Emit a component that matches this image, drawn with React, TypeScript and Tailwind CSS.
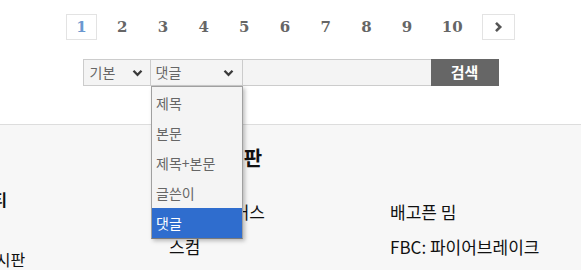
import React from "react";

function Chevron({ className = "" }: { className?: string }) {
  return (
    <svg width="11" height="8" viewBox="0 0 11 8" className={className}>
      <polyline points="1.5,1.8 5.5,5.8 9.5,1.8" fill="none" stroke="#3a3a3a" strokeWidth="2.3" />
    </svg>
  );
}

export default function App() {
  const pages = ["2", "3", "4", "5", "6", "7", "8", "9"];
  return (
    <div className="relative w-[581px] h-[270px] overflow-hidden bg-[#f7f7f7] font-['Noto_Sans_CJK_KR',sans-serif]">
      <div className="h-[125px] bg-white border-b border-[#dddddd]">
        <div className="flex justify-center gap-[9.7px] pt-[14px] font-['DejaVu_Serif',serif] font-bold text-[15px] text-[#666]">
          <div className="w-[31px] h-[26px] border border-[#e3e3e3] flex items-center justify-center text-[#6b98d0]">1</div>
          {pages.map((p) => (
            <div key={p} className="w-[31px] h-[26px] flex items-center justify-center">{p}</div>
          ))}
          <div className="w-[40px] h-[26px] flex items-center justify-center">10</div>
          <div className="w-[33px] h-[26px] border border-[#e3e3e3] flex items-center justify-center">
            <svg width="9" height="12" viewBox="0 0 9 12">
              <polyline points="2,1.8 6.2,6 2,10.2" fill="none" stroke="#555" strokeWidth="2.6" />
            </svg>
          </div>
        </div>
        <div className="flex justify-center mt-[19px] h-[27px] text-[14px] text-[#666]">
          <div className="w-[68px] border border-[#cccccc] bg-[#f4f4f4] flex items-center justify-between pl-[6px] pr-[7px]">
            <span>기본</span>
            <Chevron />
          </div>
          <div className="w-[92px] border-y border-r border-[#cccccc] bg-[#f4f4f4] flex items-center justify-between pl-[5px] pr-[8px]">
            <span>댓글</span>
            <Chevron />
          </div>
          <div className="w-[188px] border-y border-[#cccccc] bg-[#f4f4f4]" />
          <div className="w-[68px] bg-[#666666] text-white text-[15px] font-bold flex items-center justify-center">검색</div>
        </div>
      </div>

      <div className="pt-[19px]">
        <div className="pl-[207px] h-[28px] leading-[28px] text-[20px] font-bold text-[#111]">게시판</div>
        <div className="ml-[-52px] grid grid-cols-[221px_221px_221px] text-[17px] text-[#111] leading-[24px]">
          <div className="pt-[15px]">
            <div className="font-bold text-[16px]">커뮤니티</div>
            <div className="mt-[36px] text-[16px]">자유 게시판</div>
          </div>
          <div className="pt-[28px] flex flex-col gap-[11px]">
            <div className="pl-[14px]">스페 워커스</div>
            <div>스컴</div>
          </div>
          <div className="pt-[28px] flex flex-col gap-[11px]">
            <div>배고픈 밈</div>
            <div>FBC: 파이어브레이크</div>
          </div>
        </div>
      </div>

      <div className="absolute left-[151px] top-[86px] w-[92px] border border-[#a0a0a0] border-b-[#7a7a7a] bg-[#f4f4f4] pt-[1px] shadow-[2px_2px_4px_rgba(0,0,0,0.25)] text-[14px] text-[#666]">
        {["제목", "본문", "제목+본문", "글쓴이"].map((t) => (
          <div key={t} className="h-[30px] flex items-center pl-[4px]">{t}</div>
        ))}
        <div className="h-[30px] flex items-center pl-[4px] bg-[#2f6dce] text-white">댓글</div>
      </div>
    </div>
  );
}
